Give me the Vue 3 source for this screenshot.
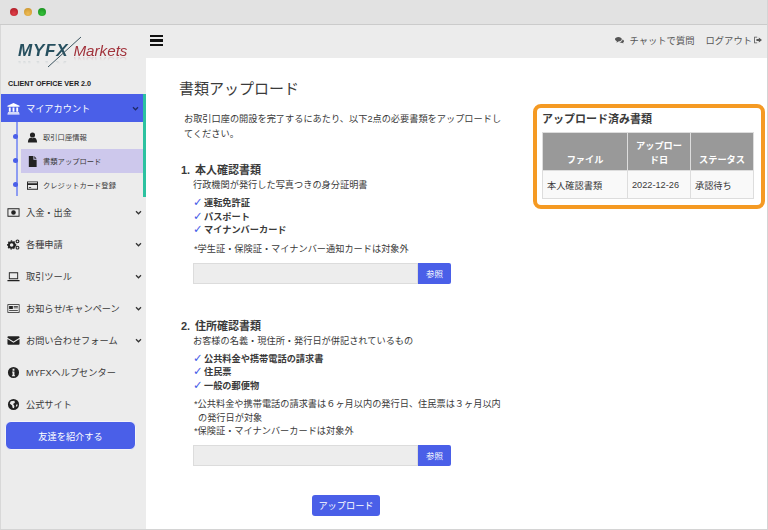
<template>
  <div class="window">
    <div class="titlebar">
      <span class="light red"></span>
      <span class="light yellow"></span>
      <span class="light green"></span>
    </div>
    <div class="app">
      <aside class="sidebar">
        <div class="logo">
          <span class="logo-myfx">MYFX</span><span class="logo-markets">Markets</span>
          <svg class="logo-slash" width="36" height="32" viewBox="0 0 36 32">
            <path d="M1 31 L34 1" stroke="#3d5560" stroke-width="1" fill="none" />
          </svg>
        </div>
        <div class="version">CLIENT OFFICE VER 2.0</div>

        <div class="account">
          <div class="nav-row active">
            <svg class="nav-icon" viewBox="0 0 14 14">
              <path fill="#fff" d="M7 1 L13.5 4 V5 H.5 V4 Z M2 5.8 H4 V10.5 H2 Z M6 5.8 H8 V10.5 H6 Z M10 5.8 H12 V10.5 H10 Z M1 11 H13 V12 H1 Z M.5 12.5 H13.5 V13.5 H.5 Z" />
            </svg>
            <span class="nav-label">マイアカウント</span>
            <svg class="chev" viewBox="0 0 8 6"><path d="M1 1.5 L4 4.5 L7 1.5" fill="none" stroke="#1f2a66" stroke-width="1.6" /></svg>
          </div>
          <div class="subnav">
            <div class="sub-row">
              <svg class="sub-icon" viewBox="0 0 12 12"><path fill="#222" d="M6 .5 A2.8 2.8 0 1 1 6 6.1 A2.8 2.8 0 1 1 6 .5 Z M1 11.5 C1 8 2.5 6.5 4 6.3 C5.2 7 6.8 7 8 6.3 C9.5 6.5 11 8 11 11.5 Z" /></svg>
              <span>取引口座情報</span>
            </div>
            <div class="sub-row current">
              <svg class="sub-icon" viewBox="0 0 12 12"><path fill="#222" d="M2 0 H7 V4 H10.5 V12 H2 Z M8 0 L10.5 3 H8 Z" /></svg>
              <span>書類アップロード</span>
            </div>
            <div class="sub-row">
              <svg class="sub-icon" viewBox="0 0 12 12"><path fill="#222" fill-rule="evenodd" d="M0 1.5 H12 V10.5 H0 Z M1 2.5 V3.5 H11 V2.5 Z M1 5.5 V9.5 H11 V5.5 Z M2 7.8 H4.5 V8.6 H2 Z" /></svg>
              <span>クレジットカード登録</span>
            </div>
          </div>
        </div>

        <div class="nav-row">
          <svg class="nav-icon" viewBox="0 0 14 14"><path fill="#222" fill-rule="evenodd" d="M.5 2.5 H13.5 V11.5 H.5 Z M1.5 3.5 V10.5 H12.5 V3.5 Z M7 4.5 A2.5 2.5 0 1 1 7 9.5 A2.5 2.5 0 1 1 7 4.5 Z" /></svg>
          <span class="nav-label">入金・出金</span>
          <svg class="chev" viewBox="0 0 8 6"><path d="M1 1.5 L4 4.5 L7 1.5" fill="none" stroke="#333" stroke-width="1.5" /></svg>
        </div>
        <div class="nav-row">
          <svg class="nav-icon" viewBox="0 0 14 14">
            <circle cx="5" cy="7.5" r="3" fill="none" stroke="#222" stroke-width="2.2" />
            <circle cx="5" cy="7.5" r="4.4" fill="none" stroke="#222" stroke-width="1.2" stroke-dasharray="1.6 1.6" />
            <circle cx="11.3" cy="3.6" r="1.5" fill="none" stroke="#222" stroke-width="1.2" />
            <circle cx="11.3" cy="10.4" r="1.5" fill="none" stroke="#222" stroke-width="1.2" />
          </svg>
          <span class="nav-label">各種申請</span>
          <svg class="chev" viewBox="0 0 8 6"><path d="M1 1.5 L4 4.5 L7 1.5" fill="none" stroke="#333" stroke-width="1.5" /></svg>
        </div>
        <div class="nav-row">
          <svg class="nav-icon" viewBox="0 0 14 14"><path fill="#222" fill-rule="evenodd" d="M2 2.5 H12 V10 H2 Z M3 3.5 V9 H11 V3.5 Z M.5 10.8 H13.5 V12 H.5 Z" /></svg>
          <span class="nav-label">取引ツール</span>
          <svg class="chev" viewBox="0 0 8 6"><path d="M1 1.5 L4 4.5 L7 1.5" fill="none" stroke="#333" stroke-width="1.5" /></svg>
        </div>
        <div class="nav-row">
          <svg class="nav-icon" viewBox="0 0 14 14"><path fill="#222" fill-rule="evenodd" d="M.5 2.5 H13.5 V11.5 H.5 Z M1.3 3.3 V10.7 H12.7 V3.3 Z M2.3 4.3 H6.3 V7.5 H2.3 Z M7.2 4.3 H11.7 V5 H7.2 Z M7.2 6 H11.7 V6.7 H7.2 Z M2.3 8.5 H11.7 V9.3 H2.3 Z" /></svg>
          <span class="nav-label">お知らせ/キャンペーン</span>
          <svg class="chev" viewBox="0 0 8 6"><path d="M1 1.5 L4 4.5 L7 1.5" fill="none" stroke="#333" stroke-width="1.5" /></svg>
        </div>
        <div class="nav-row">
          <svg class="nav-icon" viewBox="0 0 14 14"><path fill="#222" d="M1.5 2.5 H12.5 A1 1 0 0 1 13.5 3.5 V4 L7 8 L.5 4 V3.5 A1 1 0 0 1 1.5 2.5 Z M.5 5.3 L7 9.3 L13.5 5.3 V10.5 A1 1 0 0 1 12.5 11.5 H1.5 A1 1 0 0 1 .5 10.5 Z" /></svg>
          <span class="nav-label">お問い合わせフォーム</span>
          <svg class="chev" viewBox="0 0 8 6"><path d="M1 1.5 L4 4.5 L7 1.5" fill="none" stroke="#333" stroke-width="1.5" /></svg>
        </div>
        <div class="nav-row">
          <svg class="nav-icon" viewBox="0 0 14 14"><path fill="#222" fill-rule="evenodd" d="M7 1 A6 6 0 1 1 7 13 A6 6 0 1 1 7 1 Z M6 3 V5 H8 V3 Z M5.5 6 V7 H6 V10 H5.3 V11 H8.7 V10 H8 V6 Z" /></svg>
          <span class="nav-label">MYFXヘルプセンター</span>
        </div>
        <div class="nav-row">
          <svg class="nav-icon" viewBox="0 0 14 14"><path fill="#222" fill-rule="evenodd" d="M7 1 A6 6 0 1 1 7 13 A6 6 0 1 1 7 1 Z M4 3.5 L3 6 L5.5 8 L6 10.5 L7.5 11 L8 8.5 L6.5 6.5 L8.5 5 L8 3 Z M10 7 L9.5 9.5 L11 9 L11.5 7 Z" /></svg>
          <span class="nav-label">公式サイト</span>
        </div>
        <button class="invite">友達を紹介する</button>
      </aside>

      <div class="body">
        <header class="topbar">
          <div class="burger"><i></i><i></i><i></i></div>
          <div class="top-right">
            <svg class="top-icon" viewBox="0 0 12 10"><path fill="#555" d="M4.5 1 C7 1 9 2.3 9 4 C9 5.7 7 7 4.5 7 L2 8.5 L2.5 6.5 C1 6 0 5 0 4 C0 2.3 2 1 4.5 1 Z M10 4.3 C11.2 4.8 12 5.6 12 6.6 C12 7.3 11.5 8 10.8 8.4 L11.2 9.8 L9.3 8.8 C8 9 6.6 8.6 5.8 7.8 C8 7.7 10 6.3 10 4.3 Z" /></svg>
            <span class="chat">チャットで質問</span>
            <span>ログアウト</span>
            <svg class="top-icon logout" viewBox="0 0 10 10"><path fill="#555" d="M4 1 V2 H1.2 V8 H4 V9 H.2 V1 Z M6 2 L10 5 L6 8 V6.2 H3 V3.8 H6 Z" /></svg>
          </div>
        </header>

        <main class="content">
          <section class="form-col">
            <h1>書類アップロード</h1>
            <p class="intro">お取引口座の開設を完了するにあたり、以下2点の必要書類をアップロードしてください。</p>

            <div class="doc doc-first">
              <h2><span class="num">1.</span>本人確認書類</h2>
              <div class="doc-body">
                <p class="lead">行政機関が発行した写真つきの身分証明書</p>
                <ul>
                  <li v-for="item in identityDocs" :key="item"><span class="tick">✓</span>{{ item }}</li>
                </ul>
                <p class="note">*学生証・保険証・マイナンバー通知カードは対象外</p>
                <div class="file-input">
                  <div class="file-name"></div>
                  <button class="browse">参照</button>
                </div>
              </div>
            </div>

            <div class="doc doc-second">
              <h2><span class="num">2.</span>住所確認書類</h2>
              <div class="doc-body">
                <p class="lead">お客様の名義・現住所・発行日が併記されているもの</p>
                <ul>
                  <li v-for="item in addressDocs" :key="item"><span class="tick">✓</span>{{ item }}</li>
                </ul>
                <p class="note note-long">*公共料金や携帯電話の請求書は６ヶ月以内の発行日、住民票は３ヶ月以内の発行日が対象</p>
                <p class="note note-tight">*保険証・マイナンバーカードは対象外</p>
                <div class="file-input">
                  <div class="file-name"></div>
                  <button class="browse">参照</button>
                </div>
              </div>
            </div>

            <div class="submit-row">
              <button class="submit">アップロード</button>
            </div>
          </section>

          <section class="uploaded">
            <h3>アップロード済み書類</h3>
            <table>
              <thead>
                <tr>
                  <th class="c1">ファイル</th>
                  <th class="c2">アップロード日</th>
                  <th class="c3">ステータス</th>
                </tr>
              </thead>
              <tbody>
                <tr>
                  <td>本人確認書類</td>
                  <td>2022-12-26</td>
                  <td>承認待ち</td>
                </tr>
              </tbody>
            </table>
          </section>
        </main>
      </div>
    </div>
  </div>
</template>

<script setup>
const identityDocs = ['運転免許証', 'パスポート', 'マイナンバーカード']
const addressDocs = ['公共料金や携帯電話の請求書', '住民票', '一般の郵便物']
</script>

<style>
html, body { margin: 0; background: #fff; }
</style>

<style scoped>
.window {
  width: 768px;
  height: 530px;
  box-sizing: border-box;
  overflow: hidden;
  display: flex;
  flex-direction: column;
  border-right: 1px solid #d4d4d4;
  border-bottom: 1px solid #d4d4d4;
  font-family: "Liberation Sans", "Noto Sans CJK JP", sans-serif;
  font-size: 9.2px;
  color: #3a3a3a;
}
.titlebar {
  height: 23px;
  flex: none;
  display: flex;
  align-items: center;
  gap: 6px;
  padding: 0 0 1px 10px;
  background: #e2e2e2;
  border-bottom: 1px solid #cbcbcb;
  box-sizing: content-box;
}
.light { width: 8px; height: 8px; border-radius: 50%; }
.red { background: radial-gradient(circle at 50% 70%, #e0404a, #a81822); }
.yellow { background: radial-gradient(circle at 50% 70%, #eebb55, #c8922a); }
.green { background: radial-gradient(circle at 50% 70%, #35c03a, #168a1c); }

.app { flex: 1; display: flex; min-height: 0; }
.sidebar {
  width: 146px;
  flex: none;
  background: #ececec;
  border-left: 1px solid #d8d8d8;
  box-sizing: border-box;
  display: flex;
  flex-direction: column;
}
.logo {
  position: relative;
  height: 31px;
  margin-top: 10px;
  padding-left: 17px;
  display: flex;
  align-items: center;
  font-family: "Liberation Sans", sans-serif;
  font-style: italic;
  white-space: nowrap;
}
.logo-myfx, .logo-markets {
  -webkit-box-reflect: below -5px linear-gradient(transparent 60%, rgba(255, 255, 255, .3));
}
.logo-myfx { font-size: 17px; font-weight: 700; color: #27505f; letter-spacing: .8px; }
.logo-markets { font-size: 15.2px; color: #a2333c; margin-left: 5px; }
.logo-slash { position: absolute; left: 46px; top: 1px; }
.version {
  margin: 12px 0 0 7px;
  height: 16px;
  font-family: "Liberation Sans", sans-serif;
  font-size: 7.2px;
  font-weight: 700;
  color: #222;
  line-height: 11px;
  white-space: nowrap;
}
.account { border-right: 3px solid #2cc2a0; margin-bottom: -1px; }
.nav-row {
  height: 32px;
  display: flex;
  align-items: center;
  padding: 0 3px 0 6px;
  color: #3a3a3a;
  flex: none;
}
.nav-row.active {
  height: 28px;
  background: #4a5fe8;
  color: #fff;
}
.nav-icon { width: 13px; height: 13px; flex: none; }
.nav-label { margin-left: 6px; flex: 1; white-space: nowrap; }
.chev { width: 7px; height: 5px; flex: none; margin-right: 1px; }
.subnav {
  position: relative;
  padding: 3px 0 0 20px;
  height: 75px;
  box-sizing: border-box;
}
.subnav::before {
  content: "";
  position: absolute;
  left: 15px;
  top: 0;
  bottom: 1px;
  width: 2px;
  background: #8d9cf2;
}
.sub-row {
  position: relative;
  height: 24px;
  display: flex;
  align-items: center;
  padding-left: 6px;
  font-size: 7.3px;
  color: #3a3a3a;
}
.sub-row::before {
  content: "";
  position: absolute;
  left: -8px;
  top: 9px;
  width: 5px;
  height: 5px;
  border-radius: 50%;
  background: #4a5fe8;
}
.sub-row.current { background: #cdc8ec; }
.sub-icon { width: 11px; height: 11px; flex: none; margin-right: 5px; }
.invite {
  margin: 1px 0 0 4px;
  width: 131px;
  height: 29px;
  border: 1px solid #f4f4f8;
  border-radius: 6px;
  background: #4a5fe8;
  color: #fff;
  font: inherit;
  padding: 0;
}

.body { flex: 1; display: flex; flex-direction: column; min-width: 0; }
.topbar {
  height: 33px;
  flex: none;
  background: #ececec;
  display: flex;
  align-items: center;
  justify-content: space-between;
  padding: 0 5px 0 4px;
}
.burger { display: flex; flex-direction: column; gap: 2px; margin-bottom: 2px; }
.burger i { display: block; width: 13px; height: 2.4px; background: #111; }
.top-right { display: flex; align-items: center; color: #555; padding-bottom: 4px; font-size: 9.3px; }
.top-icon { width: 9px; height: 8px; margin-right: 6px; }
.chat { margin-right: 11px; }
.logout { margin: 0 0 0 2px; width: 8px; height: 8px; }

.content {
  flex: 1;
  background: #fff;
  position: relative;
  padding-left: 33px;
}
.form-col { width: 326px; }
h1 {
  margin: 0;
  padding-top: 21px;
  font-size: 15px;
  font-weight: 400;
  line-height: 20px;
}
.intro {
  margin: 13px 0 0 5px;
  line-height: 15px;
}
.doc-first { margin-top: 21px; }
.doc-second { margin-top: 35px; }
h2 {
  margin: 0 0 0 2px;
  font-size: 11px;
  line-height: 15px;
  font-weight: 700;
  display: flex;
}
.num { width: 14px; }
.doc-body { padding-left: 14px; }
.lead { margin: 0; line-height: 15px; }
ul { list-style: none; margin: 4px 0 0; padding: 0; }
li { height: 13.5px; line-height: 13.5px; font-weight: 700; }
.tick {
  display: inline-block;
  width: 11px;
  color: #4a5fe8;
  font-weight: 400;
  font-family: "DejaVu Sans", sans-serif;
  font-size: 11.5px;
  line-height: 10px;
}
.note { margin: 4px 0 0 1px; line-height: 15px; }
.note-long { margin-top: 5px; line-height: 13.5px; padding-left: 4px; text-indent: -4px; width: 305px; }
.note-tight { margin-top: 0; line-height: 13.5px; }
.file-input {
  display: flex;
  width: 258px;
  height: 21px;
  margin-top: 6px;
}
.file-name {
  flex: 1;
  background: #ededed;
  border: 1px solid #dcdcdc;
  box-sizing: border-box;
}
.browse {
  width: 33px;
  border: 0;
  padding: 0;
  background: #4a5fe8;
  color: #fff;
  font: inherit;
  font-size: 8.5px;
  border-radius: 0 2px 2px 0;
}
.submit-row {
  margin-top: 29px;
  padding-left: 133px;
}
.submit {
  width: 68px;
  height: 21px;
  border: 0;
  border-radius: 3px;
  padding: 0;
  background: #4a5fe8;
  color: #fff;
  font: inherit;
}

.uploaded {
  position: absolute;
  left: 387px;
  top: 46px;
  width: 232px;
  height: 105px;
  box-sizing: border-box;
  border: 4px solid #f59a23;
  border-radius: 8px;
  background: #fff;
  padding: 3px 5px 0;
}
h3 {
  margin: 0 0 5px;
  font-size: 11px;
  line-height: 16px;
  font-weight: 700;
}
table {
  width: 212px;
  border-collapse: collapse;
  table-layout: fixed;
}
th, td { border: 1px solid #ddd; box-sizing: border-box; }
th {
  height: 38px;
  background: #999;
  color: #fff;
  font-weight: 700;
  vertical-align: bottom;
  line-height: 14px;
  padding: 3px 4px 3px;
}
.c1 { width: 85px; }
.c2 { width: 63px; }
td {
  height: 28px;
  background: #f9f9f9;
  padding: 0 4px;
  white-space: nowrap;
}
</style>
